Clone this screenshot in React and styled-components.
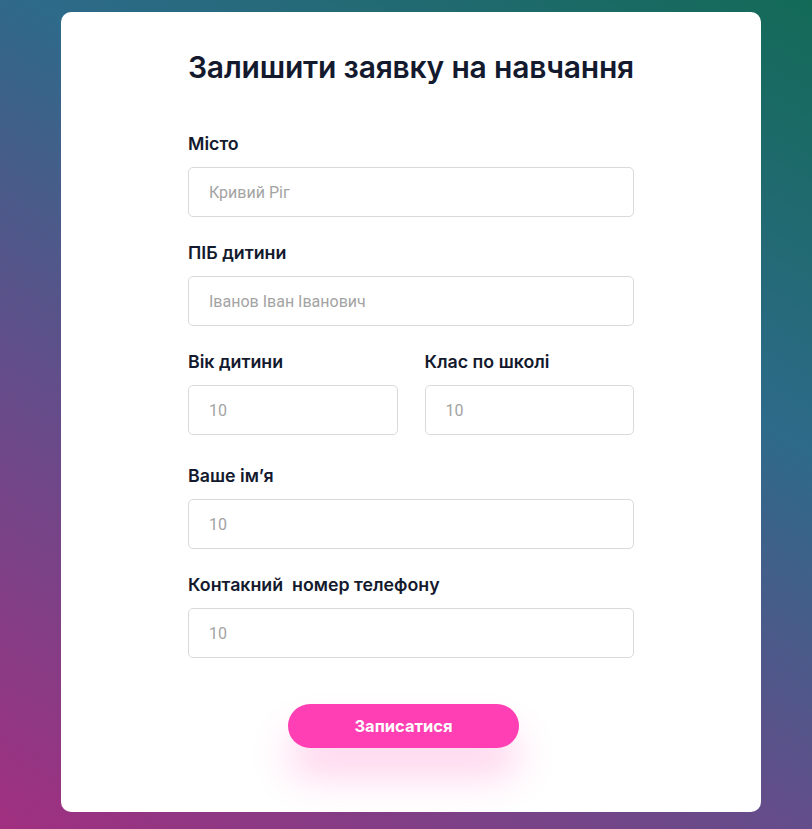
import React from 'react';
import styled, { createGlobalStyle } from 'styled-components';

const GlobalStyle = createGlobalStyle`
  html, body {
    margin: 0;
    padding: 0;
  }
  body {
    font-family: Inter, "Noto Sans", sans-serif;
  }
  * {
    box-sizing: border-box;
  }
`;

const Page = styled.div`
  min-height: 829px;
  padding: 12px 0 17px 10px;
  background: linear-gradient(30deg, #a12f80 0%, #654c8a 35%, #2e6a8a 65%, #136a57 100%);
  display: flex;
  justify-content: center;
`;

const Card = styled.div`
  width: 700px;
  height: 800px;
  background-color: #fff;
  border-radius: 10px;
  padding-top: 38px;
  display: flex;
  flex-direction: column;
  align-items: center;
`;

const Title = styled.h1`
  margin: 0 0 50px;
  font-size: 30px;
  line-height: 34px;
  font-weight: 600;
  color: #141a2e;
  letter-spacing: -0.2px;
`;

const Form = styled.form`
  width: 446px;
  display: flex;
  flex-direction: column;
  gap: 26px;
`;

const Row = styled.div`
  display: grid;
  grid-template-columns: 1fr 1fr;
  gap: 27px;
  margin-bottom: ${props => props.extra || 0}px;
`;

const Field = styled.label`
  display: flex;
  flex-direction: column;
  gap: 13px;
`;

const Label = styled.span`
  font-size: 17.8px;
  line-height: 20px;
  font-weight: 600;
  color: #141a2e;
  white-space: pre;
`;

const Input = styled.input`
  height: 50px;
  width: 100%;
  border: 1px solid #dadada;
  border-radius: 5px;
  padding: 0 20px;
  font-family: Roboto, "Noto Sans", sans-serif;
  font-size: 16px;
  color: #333;
  outline: none;

  &::placeholder {
    color: #a3a3a3;
  }
`;

const Submit = styled.button`
  align-self: center;
  margin: 20px 15px 0 0;
  width: 231px;
  height: 44px;
  border: none;
  border-radius: 22px;
  background-color: #ff3fb3;
  color: #fff;
  font-family: Inter, "Noto Sans", sans-serif;
  font-size: 16.5px;
  font-weight: 700;
  cursor: pointer;
  box-shadow: 0 28px 38px rgba(255, 70, 175, 0.24);
`;

function App() {
  return (
    <>
      <GlobalStyle />
      <Page>
        <Card>
          <Title>Залишити заявку на навчання</Title>
          <Form onSubmit={e => e.preventDefault()}>
            <Field>
              <Label>Місто</Label>
              <Input placeholder="Кривий Ріг" />
            </Field>
            <Field>
              <Label>ПІБ дитини</Label>
              <Input placeholder="Іванов Іван Іванович" />
            </Field>
            <Row extra={5}>
              <Field>
                <Label>Вік дитини</Label>
                <Input placeholder="10" />
              </Field>
              <Field>
                <Label>Клас по школі</Label>
                <Input placeholder="10" />
              </Field>
            </Row>
            <Field>
              <Label>Ваше ім’я</Label>
              <Input placeholder="10" />
            </Field>
            <Field>
              <Label>Контакний  номер телефону</Label>
              <Input placeholder="10" />
            </Field>
            <Submit type="submit">Записатися</Submit>
          </Form>
        </Card>
      </Page>
    </>
  );
}

export default App;
